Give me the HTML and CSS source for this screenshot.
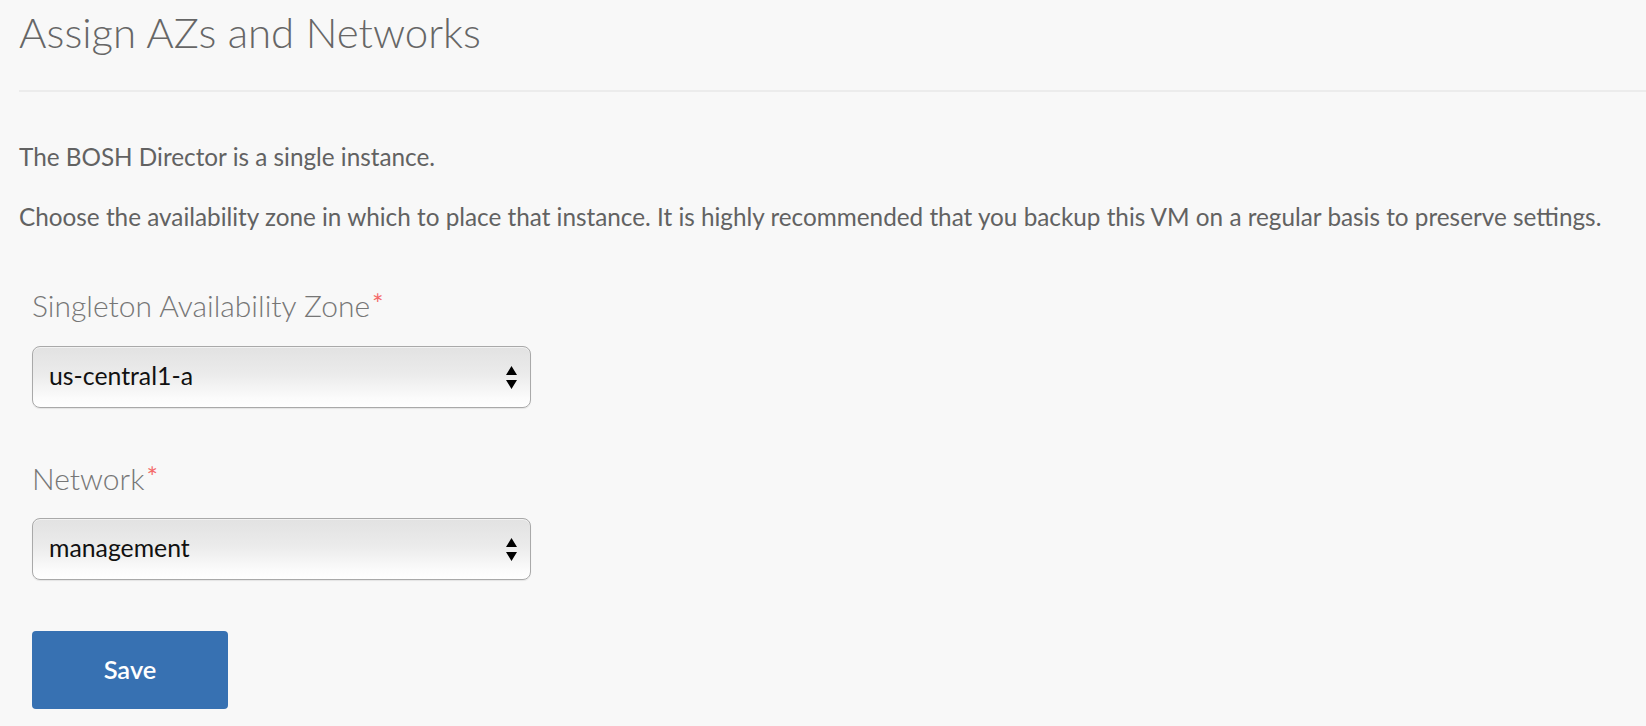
FILE: index.html
```html
<!DOCTYPE html>
<html lang="en">
<head>
<meta charset="utf-8">
<title>Assign AZs and Networks</title>
<link rel="stylesheet" href="styles.css">
</head>
<body>
<main class="page">
  <header class="header">
    <h1 class="title">Assign AZs and Networks</h1>
  </header>
  <section class="intro">
    <p class="text">The BOSH Director is a single instance.</p>
    <p class="text">Choose the availability zone in which to place that instance. It is highly recommended that you backup this VM on a regular basis to preserve settings.</p>
  </section>
  <form class="form">
    <div class="field">
      <label class="label">Singleton Availability Zone<span class="req">*</span></label>
      <div class="select">
        <span class="select-value">us-central1-a</span>
        <svg class="arrows" width="11" height="23" viewBox="0 0 11 23"><path d="M5.5 0 L11 9 L0 9 Z M0 14 L11 14 L5.5 23 Z" fill="#000"/></svg>
      </div>
    </div>
    <div class="field">
      <label class="label">Network<span class="req">*</span></label>
      <div class="select select-second">
        <span class="select-value">management</span>
        <svg class="arrows" width="11" height="23" viewBox="0 0 11 23"><path d="M5.5 0 L11 9 L0 9 Z M0 14 L11 14 L5.5 23 Z" fill="#000"/></svg>
      </div>
    </div>
    <button type="button" class="btn">Save</button>
  </form>
</main>
</body>
</html>
```
FILE: styles.css
```css
html, body {
  margin: 0;
  padding: 0;
  background: #f8f8f8;
}
body {
  font-family: "Lato", "Open Sans", sans-serif;
  color: #666;
}
.page {
  padding-left: 19px;
}
.header {
  padding-top: 7px;
  padding-bottom: 33px;
  border-bottom: 2px solid #ececec;
}
.title {
  margin: 0;
  font-weight: 300;
  font-size: 42px;
  line-height: 50px;
  color: #666;
}
.intro {
  margin-top: 47px;
}
.text {
  margin: 0;
  font-size: 24.3px;
  line-height: 36px;
  color: #626262;
}
.text + .text {
  margin-top: 24px;
}
.form {
  margin: 52px 0 0 0;
  padding-left: 13px;
  display: flex;
  flex-direction: column;
  align-items: flex-start;
}
.field {
  display: flex;
  flex-direction: column;
  align-items: flex-start;
}
.field + .field {
  margin-top: 52px;
}
.label {
  display: block;
  font-weight: 300;
  font-size: 30px;
  line-height: 36px;
  color: #767676;
}
.req {
  color: #f46a6a;
  font-size: 27px;
  font-weight: 400;
  line-height: 0;
  vertical-align: 3px;
  margin-left: 2px;
}
.select {
  box-sizing: border-box;
  margin-top: 23px;
  width: 499px;
  height: 62px;
  border: 1px solid #a9a9a9;
  border-radius: 8px;
  background: linear-gradient(#e2e2e2 0%, #ebebeb 45%, #fbfbfb 85%, #ffffff 100%);
  box-shadow: inset 0 1px 0 #f2f2f2, 0 1px 1px rgba(0,0,0,0.08);
  display: flex;
  align-items: center;
  justify-content: space-between;
  padding: 0 13px 3px 16px;
}
.select-second {
  margin-top: 22px;
}
.select-value {
  font-size: 24.8px;
  color: #111;
}
.arrows {
  display: block;
  margin-top: 3px;
}
.btn {
  margin-top: 51px;
  width: 196px;
  height: 78px;
  border: none;
  border-radius: 4px;
  background: #3771b2;
  color: #fff;
  font-family: "Lato", "Open Sans", sans-serif;
  font-weight: 600;
  font-size: 25.5px;
  padding: 0 0 2px 0;
  cursor: pointer;
}
```
